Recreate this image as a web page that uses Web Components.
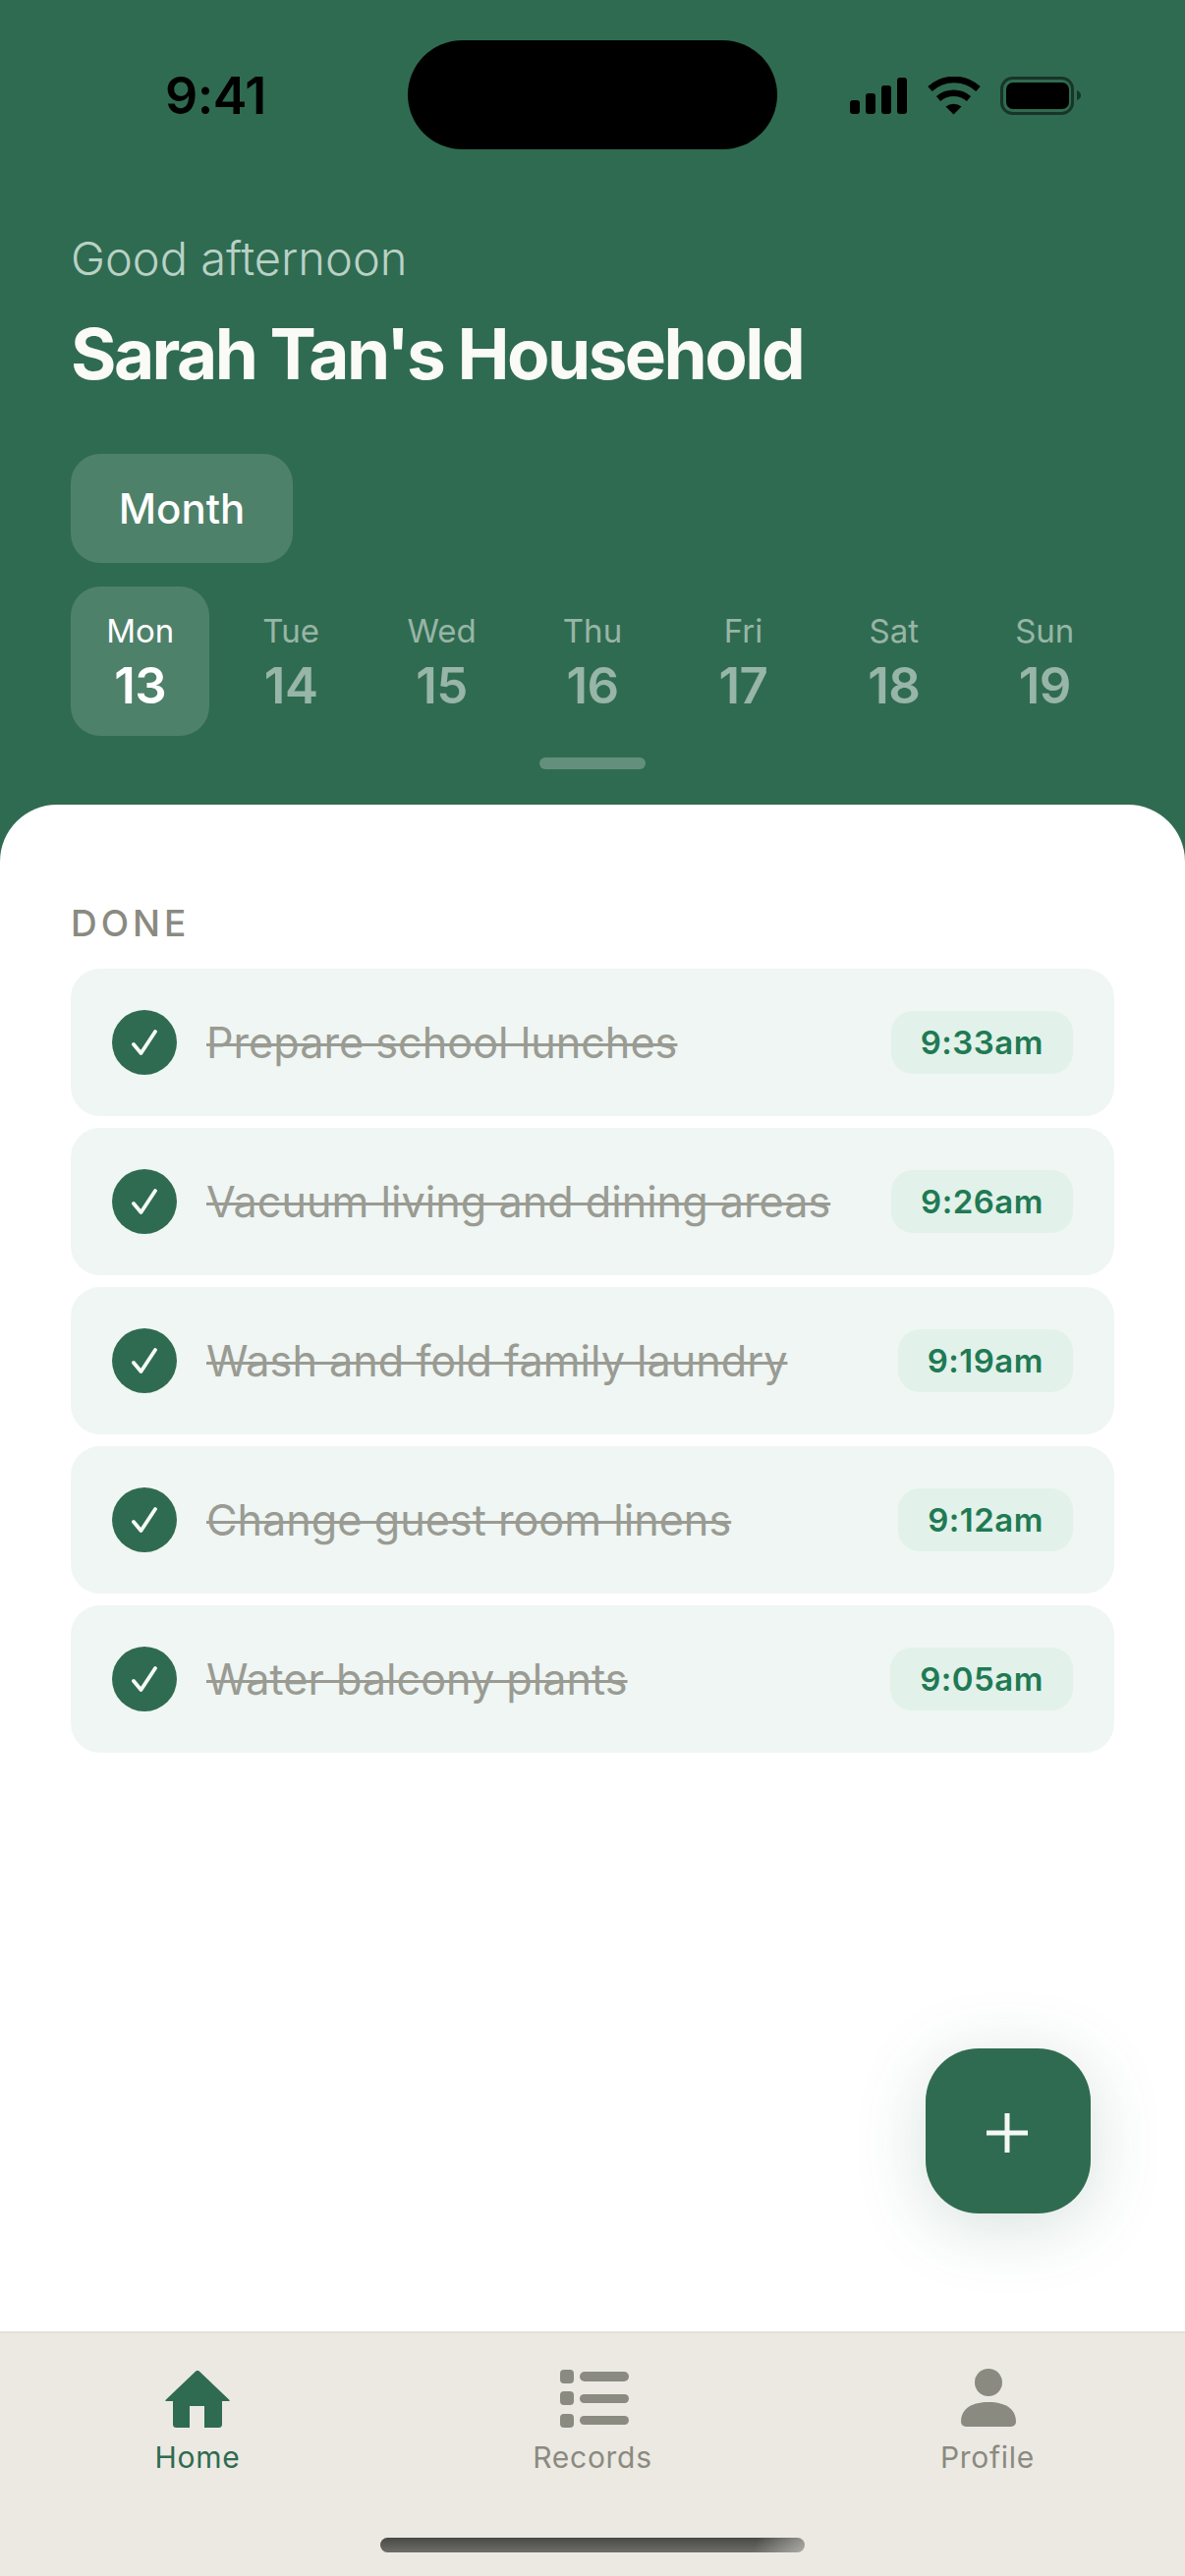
<!DOCTYPE html>
<html>
<head>
<meta charset="utf-8">
<title>Household</title>
<style>
  html, body { margin: 0; padding: 0; background: #2f6b50; }
  body { font-family: Inter, "Liberation Sans", sans-serif; }
</style>
</head>
<body>
<app-screen>
  <home-header slot="top" greeting="Good afternoon" title="Sarah Tan's Household">
    <day-cell name="Mon" num="13" active></day-cell>
    <day-cell name="Tue" num="14"></day-cell>
    <day-cell name="Wed" num="15"></day-cell>
    <day-cell name="Thu" num="16"></day-cell>
    <day-cell name="Fri" num="17"></day-cell>
    <day-cell name="Sat" num="18"></day-cell>
    <day-cell name="Sun" num="19"></day-cell>
  </home-header>
  <task-list heading="DONE">
    <task-row time="9:33am">Prepare school lunches</task-row>
    <task-row time="9:26am">Vacuum living and dining areas</task-row>
    <task-row time="9:19am">Wash and fold family laundry</task-row>
    <task-row time="9:12am">Change guest room linens</task-row>
    <task-row time="9:05am">Water balcony plants</task-row>
  </task-list>
  <add-fab slot="fab"></add-fab>
  <tab-bar slot="bottom">
    <tab-item label="Home" active>
      <svg viewBox="0 0 66 58" width="66" height="58"><path d="M31 .8a3 3 0 0 1 4 0L65.600 30a.6.6 0 0 1-.4 1H58v23.500a3.500 3.500 0 0 1-3.500 3.500H40V36H25v22H11.500A3.500 3.500 0 0 1 8 54.500V31H.8a.6.6 0 0 1-.4-1z" fill="currentColor"/></svg>
    </tab-item>
    <tab-item label="Records">
      <svg viewBox="0 0 70 60" width="70" height="60" fill="currentColor" style="margin-left: 3px">
        <rect x="0" y="1" width="14" height="14" rx="4"/><rect x="20" y="3" width="50" height="10" rx="5"/>
        <rect x="0" y="23" width="14" height="14" rx="4"/><rect x="20" y="26" width="50" height="9" rx="4.500"/>
        <rect x="0" y="46" width="14" height="14" rx="4"/><rect x="20" y="48" width="50" height="9" rx="4.500"/>
      </svg>
    </tab-item>
    <tab-item label="Profile">
      <svg viewBox="0 0 56 60" width="56" height="60" fill="currentColor" style="margin-left: 2px"><circle cx="28" cy="14" r="14"/><path d="M0 54c0-14 12-20 28-20s28 6 28 20a5 5 0 0 1-5 5H5a5 5 0 0 1-5-5z"/></svg>
    </tab-item>
  </tab-bar>
</app-screen>

<script>
  const appTemplate = document.createElement("template");
  appTemplate.innerHTML = /*template*/ `
    <style>
      :host {
        display: flex;
        flex-direction: column;
        position: relative;
        width: 1206px;
        height: 2622px;
        overflow: hidden;
        background: #2f6b50;
      }
      #sheet {
        flex: 1;
        background: #fff;
        border-radius: 58px 58px 0 0;
      }
      #fab {
        position: absolute;
        left: 942px;
        top: 2085px;
      }
    </style>
    <slot name="top"></slot>
    <div id="sheet"><slot></slot></div>
    <div id="fab"><slot name="fab"></slot></div>
    <slot name="bottom"></slot>
  `;

  class AppScreen extends HTMLElement {
    constructor() {
      super();
      this.attachShadow({ mode: "open" });
      this.shadowRoot.appendChild(appTemplate.content.cloneNode(true));
    }
  }

  const headerTemplate = document.createElement("template");
  headerTemplate.innerHTML = /*template*/ `
    <style>
      :host {
        display: block;
        height: 819px;
        box-sizing: border-box;
        color: #fff;
      }
      #status {
        display: flex;
        align-items: center;
        justify-content: space-between;
        height: 111px;
        margin-top: 41px;
        position: relative;
        padding: 0 105px 0 168px;
      }
      #clock {
        font-size: 52px;
        font-weight: 600;
        color: #000;
        line-height: 1;
        margin-top: 2px;
        letter-spacing: -0.5px;
      }
      #island {
        position: absolute;
        left: 415px;
        top: 0;
        width: 376px;
        height: 111px;
        border-radius: 56px;
        background: #000;
      }
      #icons { display: block; margin-top: 3px; }
      #intro { padding: 84px 72px 0; }
      #greeting {
        font-size: 47px;
        line-height: 54px;
        font-weight: 300;
        color: #b9d1c6;
      }
      #title {
        font-size: 71px;
        line-height: 84px;
        font-weight: 700;
        letter-spacing: -2.55px;
        margin-top: 28px;
        color: #fafaf6;
      }
      #month {
        display: flex;
        align-items: center;
        justify-content: center;
        width: 226px;
        height: 111px;
        margin: 60px 0 0 72px;
        border-radius: 30px;
        background: rgba(255, 255, 255, 0.15);
        font-size: 42px;
        font-weight: 500;
      }
      #days {
        display: flex;
        gap: 12px;
        margin: 24px 72px 0;
      }
      #handle {
        width: 108px;
        height: 12px;
        margin: 22px auto 0;
        border-radius: 6px;
        background: rgba(255, 255, 255, 0.25);
      }
    </style>
    <div id="status">
      <div id="clock">9:41</div>
      <div id="island"></div>
      <svg id="icons" width="236" height="40" viewBox="865 78 236 40">
        <rect x="865" y="102" width="10" height="14" rx="3"/>
        <rect x="881" y="95" width="10" height="21" rx="3"/>
        <rect x="897" y="87" width="10" height="29" rx="3"/>
        <rect x="913" y="79" width="10" height="37" rx="3"/>
        <path d="M946.500 90.500a36 36 0 0 1 49 0" fill="none" stroke="#000" stroke-width="6.500"/>
        <path d="M955 100.500a24 24 0 0 1 31 0" fill="none" stroke="#000" stroke-width="6.500"/>
        <path d="M962.500 108.500a13 13 0 0 1 16 0L970.500 116.500z"/>
        <rect x="1019.500" y="79.500" width="72" height="36" rx="11" fill="none" stroke="#000" stroke-opacity="0.5" stroke-width="3"/>
        <rect x="1024" y="84" width="64" height="27" rx="7"/>
        <path d="M1096 92c3 1 4 3 4 5s-1 4-4 5z" fill-opacity="0.5"/>
      </svg>
    </div>
    <div id="intro">
      <div id="greeting"></div>
      <div id="title"></div>
    </div>
    <div id="month">Month</div>
    <div id="days"><slot></slot></div>
    <div id="handle"></div>
  `;

  class HomeHeader extends HTMLElement {
    constructor() {
      super();
      this.attachShadow({ mode: "open" });
      this.shadowRoot.appendChild(headerTemplate.content.cloneNode(true));
    }

    connectedCallback() {
      this.shadowRoot.getElementById("greeting").innerText = this.getAttribute("greeting");
      this.shadowRoot.getElementById("title").innerText = this.getAttribute("title");
    }
  }

  const dayTemplate = document.createElement("template");
  dayTemplate.innerHTML = /*template*/ `
    <style>
      :host {
        display: flex;
        flex-direction: column;
        align-items: center;
        flex: 1;
        height: 152px;
        border-radius: 30px;
        color: rgba(255, 255, 255, 0.5);
      }
      :host([active]) {
        background: rgba(255, 255, 255, 0.15);
        color: #fff;
      }
      #name {
        font-size: 33px;
        line-height: 40px;
        margin-top: 25px;
      }
      #num {
        font-size: 51px;
        line-height: 58px;
        font-weight: 600;
        letter-spacing: -0.5px;
        margin-top: 7px;
      }
    </style>
    <div id="name"></div>
    <div id="num"></div>
  `;

  class DayCell extends HTMLElement {
    constructor() {
      super();
      this.attachShadow({ mode: "open" });
      this.shadowRoot.appendChild(dayTemplate.content.cloneNode(true));
    }

    connectedCallback() {
      this.shadowRoot.getElementById("name").innerText = this.getAttribute("name");
      this.shadowRoot.getElementById("num").innerText = this.getAttribute("num");
    }
  }

  const listTemplate = document.createElement("template");
  listTemplate.innerHTML = /*template*/ `
    <style>
      :host {
        display: flex;
        flex-direction: column;
        gap: 12px;
        padding: 99px 72px 0;
      }
      h2 {
        margin: 0 0 12px;
        font-size: 37px;
        line-height: 44px;
        font-weight: 500;
        letter-spacing: 4px;
        color: #8a8a80;
      }
    </style>
    <h2></h2>
    <slot></slot>
  `;

  class TaskList extends HTMLElement {
    constructor() {
      super();
      this.attachShadow({ mode: "open" });
      this.shadowRoot.appendChild(listTemplate.content.cloneNode(true));
    }

    connectedCallback() {
      this.shadowRoot.querySelector("h2").innerText = this.getAttribute("heading");
    }
  }

  const taskTemplate = document.createElement("template");
  taskTemplate.innerHTML = /*template*/ `
    <style>
      :host {
        display: flex;
        align-items: center;
        gap: 30px;
        height: 150px;
        box-sizing: border-box;
        padding: 0 42px;
        border-radius: 30px;
        background: #eff6f3;
      }
      #check {
        display: flex;
        align-items: center;
        justify-content: center;
        flex: none;
        width: 66px;
        height: 66px;
        border-radius: 50%;
        background: #2f6b50;
      }
      #text {
        flex: 1;
        font-size: 43.2px;
        line-height: 52px;
        color: #9a9b93;
        text-decoration: line-through;
        text-decoration-thickness: 3px;
        white-space: nowrap;
      }
      #time {
        flex: none;
        height: 64px;
        line-height: 64px;
        padding: 0 30px;
        border-radius: 22px;
        background: #e2f1e9;
        color: #1f7a54;
        font-size: 33px;
        font-weight: 600;
        letter-spacing: 0.5px;
      }
    </style>
    <div id="check">
      <svg width="26" height="26" viewBox="0 0 26 26"><path d="M2 15 9.500 24 24 2" fill="none" stroke="#f6faf7" stroke-width="3.800" stroke-linecap="round" stroke-linejoin="round"/></svg>
    </div>
    <div id="text"><slot></slot></div>
    <div id="time"></div>
  `;

  class TaskRow extends HTMLElement {
    constructor() {
      super();
      this.attachShadow({ mode: "open" });
      this.shadowRoot.appendChild(taskTemplate.content.cloneNode(true));
    }

    connectedCallback() {
      this.shadowRoot.getElementById("time").innerText = this.getAttribute("time");
    }
  }

  const fabTemplate = document.createElement("template");
  fabTemplate.innerHTML = /*template*/ `
    <style>
      :host {
        display: flex;
        align-items: center;
        justify-content: center;
        width: 168px;
        height: 168px;
        border-radius: 54px;
        background: #2f6b50;
        box-shadow: 0 12px 72px rgba(47, 107, 80, 0.2);
      }
      svg { margin: 4px 2px 0 0; }
    </style>
    <svg width="42" height="40" viewBox="0 0 42 40"><path d="M21 0v40M0 20h42" stroke="#f4f8f5" stroke-width="5"/></svg>
  `;

  class AddFab extends HTMLElement {
    constructor() {
      super();
      this.attachShadow({ mode: "open" });
      this.shadowRoot.appendChild(fabTemplate.content.cloneNode(true));
    }
  }

  const tabBarTemplate = document.createElement("template");
  tabBarTemplate.innerHTML = /*template*/ `
    <style>
      :host {
        display: block;
        height: 249px;
        box-sizing: border-box;
        border-top: 2px solid #e2e0da;
        background: #ece9e3;
      }
      #tabs { display: flex; }
      #home-bar {
        width: 432px;
        height: 15px;
        margin: 0 auto;
        border-radius: 8px;
        background:
          linear-gradient(105deg, transparent 88%, rgba(236, 233, 227, 0.5) 100%),
          linear-gradient(180deg, #484846, #6e6e6a);
      }
    </style>
    <div id="tabs"><slot></slot></div>
    <div id="home-bar"></div>
  `;

  class TabBar extends HTMLElement {
    constructor() {
      super();
      this.attachShadow({ mode: "open" });
      this.shadowRoot.appendChild(tabBarTemplate.content.cloneNode(true));
    }
  }

  const tabTemplate = document.createElement("template");
  tabTemplate.innerHTML = /*template*/ `
    <style>
      :host {
        display: flex;
        flex-direction: column;
        align-items: center;
        flex: 1;
        height: 208px;
        padding-top: 36px;
        box-sizing: border-box;
        color: #8a8a80;
      }
      :host([active]) { color: #2f6b50; }
      #icon {
        display: flex;
        align-items: flex-end;
        justify-content: center;
        height: 60px;
      }
      #label {
        font-size: 30px;
        line-height: 36px;
        font-weight: 400;
        letter-spacing: 0.7px;
        margin-top: 12px;
      }
    </style>
    <div id="icon"><slot></slot></div>
    <div id="label"></div>
  `;

  class TabItem extends HTMLElement {
    constructor() {
      super();
      this.attachShadow({ mode: "open" });
      this.shadowRoot.appendChild(tabTemplate.content.cloneNode(true));
    }

    connectedCallback() {
      this.shadowRoot.getElementById("label").innerText = this.getAttribute("label");
    }
  }

  customElements.define("app-screen", AppScreen);
  customElements.define("home-header", HomeHeader);
  customElements.define("day-cell", DayCell);
  customElements.define("task-list", TaskList);
  customElements.define("task-row", TaskRow);
  customElements.define("add-fab", AddFab);
  customElements.define("tab-bar", TabBar);
  customElements.define("tab-item", TabItem);
</script>
</body>
</html>
